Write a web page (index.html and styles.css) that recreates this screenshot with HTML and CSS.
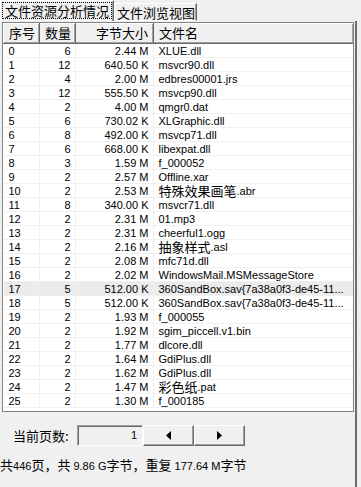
FILE: index.html
```html
<!DOCTYPE html>
<html lang="zh">
<head>
    <meta charset="UTF-8">
    <title>文件资源分析情况</title>
    <link rel="stylesheet" href="styles.css">
</head>
<body>
    <div class="tabs">
        <div class="tab active"><span class="focus zh">文件资源分析情况</span></div>
        <div class="tab"><span class="zh">文件浏览视图</span></div>
    </div>

    <div class="panel">
        <!-- list view -->
        <div class="list">
            <table class="grid">
                <colgroup>
                    <col class="c-idx">
                    <col class="c-cnt">
                    <col class="c-size">
                    <col class="c-name">
                </colgroup>
                <thead>
                    <tr>
                        <th><span class="zh">序号</span></th>
                        <th class="num"><span class="zh">数量</span></th>
                        <th class="num"><span class="zh">字节大小</span></th>
                        <th><span class="zh">文件名</span></th>
                    </tr>
                </thead>
                <tbody>
                    <tr><td>0</td><td class="num">6</td><td class="num">2.44 M</td><td>XLUE.dll</td></tr>
                    <tr><td>1</td><td class="num">12</td><td class="num">640.50 K</td><td>msvcr90.dll</td></tr>
                    <tr><td>2</td><td class="num">4</td><td class="num">2.00 M</td><td>edbres00001.jrs</td></tr>
                    <tr><td>3</td><td class="num">12</td><td class="num">555.50 K</td><td>msvcp90.dll</td></tr>
                    <tr><td>4</td><td class="num">2</td><td class="num">4.00 M</td><td>qmgr0.dat</td></tr>
                    <tr><td>5</td><td class="num">6</td><td class="num">730.02 K</td><td>XLGraphic.dll</td></tr>
                    <tr><td>6</td><td class="num">8</td><td class="num">492.00 K</td><td>msvcp71.dll</td></tr>
                    <tr><td>7</td><td class="num">6</td><td class="num">668.00 K</td><td>libexpat.dll</td></tr>
                    <tr><td>8</td><td class="num">3</td><td class="num">1.59 M</td><td>f_000052</td></tr>
                    <tr><td>9</td><td class="num">2</td><td class="num">2.57 M</td><td>Offline.xar</td></tr>
                    <tr><td>10</td><td class="num">2</td><td class="num">2.53 M</td><td><span class="zh">特殊效果画笔</span>.abr</td></tr>
                    <tr><td>11</td><td class="num">8</td><td class="num">340.00 K</td><td>msvcr71.dll</td></tr>
                    <tr><td>12</td><td class="num">2</td><td class="num">2.31 M</td><td>01.mp3</td></tr>
                    <tr><td>13</td><td class="num">2</td><td class="num">2.31 M</td><td>cheerful1.ogg</td></tr>
                    <tr><td>14</td><td class="num">2</td><td class="num">2.16 M</td><td><span class="zh">抽象样式</span>.asl</td></tr>
                    <tr><td>15</td><td class="num">2</td><td class="num">2.08 M</td><td>mfc71d.dll</td></tr>
                    <tr><td>16</td><td class="num">2</td><td class="num">2.02 M</td><td>WindowsMail.MSMessageStore</td></tr>
                    <tr class="hot"><td>17</td><td class="num">5</td><td class="num">512.00 K</td><td>360SandBox.sav{7a38a0f3-de45-11...</td></tr>
                    <tr><td>18</td><td class="num">5</td><td class="num">512.00 K</td><td>360SandBox.sav{7a38a0f3-de45-11...</td></tr>
                    <tr><td>19</td><td class="num">2</td><td class="num">1.93 M</td><td>f_000055</td></tr>
                    <tr><td>20</td><td class="num">2</td><td class="num">1.92 M</td><td>sgim_piccell.v1.bin</td></tr>
                    <tr><td>21</td><td class="num">2</td><td class="num">1.77 M</td><td>dlcore.dll</td></tr>
                    <tr><td>22</td><td class="num">2</td><td class="num">1.64 M</td><td>GdiPlus.dll</td></tr>
                    <tr><td>23</td><td class="num">2</td><td class="num">1.62 M</td><td>GdiPlus.dll</td></tr>
                    <tr><td>24</td><td class="num">2</td><td class="num">1.47 M</td><td><span class="zh">彩色纸</span>.pat</td></tr>
                    <tr><td>25</td><td class="num">2</td><td class="num">1.30 M</td><td>f_000185</td></tr>
                </tbody>
            </table>
        </div>

        <!-- pager -->
        <div class="pager">
            <span class="label zh">当前页数:</span>
            <div class="page-box">1</div>
            <button class="nav" type="button">
                <svg width="5" height="9" viewBox="0 0 5 9"><polygon points="5,0 5,9 0,4.5" fill="#000"/></svg>
            </button>
            <button class="nav" type="button">
                <svg width="5" height="9" viewBox="0 0 5 9"><polygon points="0,0 0,9 5,4.5" fill="#000"/></svg>
            </button>
        </div>

        <p class="status"><span class="zh">共</span>446<span class="zh">页，共</span> 9.86 G<span class="zh">字节，重复</span> 177.64 M<span class="zh">字节</span></p>
    </div>
</body>
</html>
```

FILE: styles.css
```css
/* Global */
body {
    margin: 0;
    width: 361px;
    height: 487px;
    overflow: hidden;
    background-color: #f0f0f0;
    font-family: "Liberation Sans", "Noto Sans CJK SC", sans-serif;
    font-size: 11px;
    color: #000;
}

.zh {
    font-family: "Noto Sans CJK SC", sans-serif;
    font-size: 13px;
}

/* Tabs */
.tabs {
    display: flex;
    align-items: flex-end;
    height: 21px;
    width: 356px;
}

.tab {
    height: 18px;
    line-height: 17px;
    padding: 0 1px 0 2px;
    border-top: 1px solid #fff;
    border-left: 1px solid #fff;
    border-right: 1px solid #696969;
    box-shadow: inset -1px 0 0 #a0a0a0;
    box-sizing: border-box;
    border-bottom: 1px solid #fff;
}

.tab.active {
    height: 21px;
    line-height: 17px;
    padding: 1px 1px 0;
    border-bottom: none;
}

.focus {
    display: block;
    padding: 0 3px;
    height: 17px;
    line-height: 17px;
    outline: 1px dotted #000;
    outline-offset: -1px;
}

/* Panel */
.panel {
    width: 357px;
    height: 466px;
    box-sizing: border-box;
    padding: 1px 0 0 2px;
    border-right: 2px solid #6d6d6d;
}

.list {
    width: 352px;
    height: 390px;
    box-sizing: border-box;
    border: 1px solid #828282;
    background-color: #fff;
    overflow: hidden;
}

.grid {
    border-collapse: collapse;
    table-layout: fixed;
    width: 350px;
}

.c-idx { width: 36px; }
.c-cnt { width: 36px; }
.c-size { width: 78px; }
.c-name { width: 200px; }

.grid th {
    height: 19px;
    padding: 0 5px;
    box-sizing: border-box;
    background-color: #f0f0f0;
    font-weight: normal;
    text-align: left;
    line-height: 17px;
    border-top: 1px solid #fff;
    border-left: 1px solid #fff;
    border-right: 1px solid #696969;
    border-bottom: 1px solid #696969;
    box-shadow: inset -1px -1px 0 #a0a0a0;
    white-space: nowrap;
    overflow: hidden;
}

.grid td {
    height: 14px;
    line-height: 14px;
    padding: 0 5px;
    box-sizing: border-box;
    box-shadow: inset -1px -1px 0 #f0f0f0;
    white-space: nowrap;
    overflow: hidden;
}

.grid td .zh {
    line-height: 14px;
    vertical-align: top;
}

.grid .num {
    text-align: right;
}

.grid tr.hot td {
    background-color: #ebebeb;
}

/* Pager */
.pager {
    display: flex;
    align-items: center;
    height: 21px;
    margin-top: 13px;
    padding-left: 11px;
}

.label {
    width: 64px;
}

.page-box {
    width: 66px;
    height: 21px;
    box-sizing: border-box;
    padding-right: 5px;
    line-height: 19px;
    text-align: right;
    border-top: 1px solid #a0a0a0;
    border-left: 1px solid #a0a0a0;
    border-right: 1px solid #fff;
    border-bottom: 1px solid #fff;
    box-shadow: inset 1px 1px 0 #696969;
}

.nav {
    width: 51px;
    height: 21px;
    margin: 0;
    padding: 0;
    background-color: #f0f0f0;
    border-top: 1px solid #fff;
    border-left: 1px solid #fff;
    border-right: 1px solid #696969;
    border-bottom: 1px solid #696969;
    box-shadow: inset -1px -1px 0 #a0a0a0;
    display: flex;
    align-items: center;
    justify-content: center;
}

.status {
    margin: 9px 0 0 -2px;
    line-height: 20px;
    white-space: nowrap;
}
```
